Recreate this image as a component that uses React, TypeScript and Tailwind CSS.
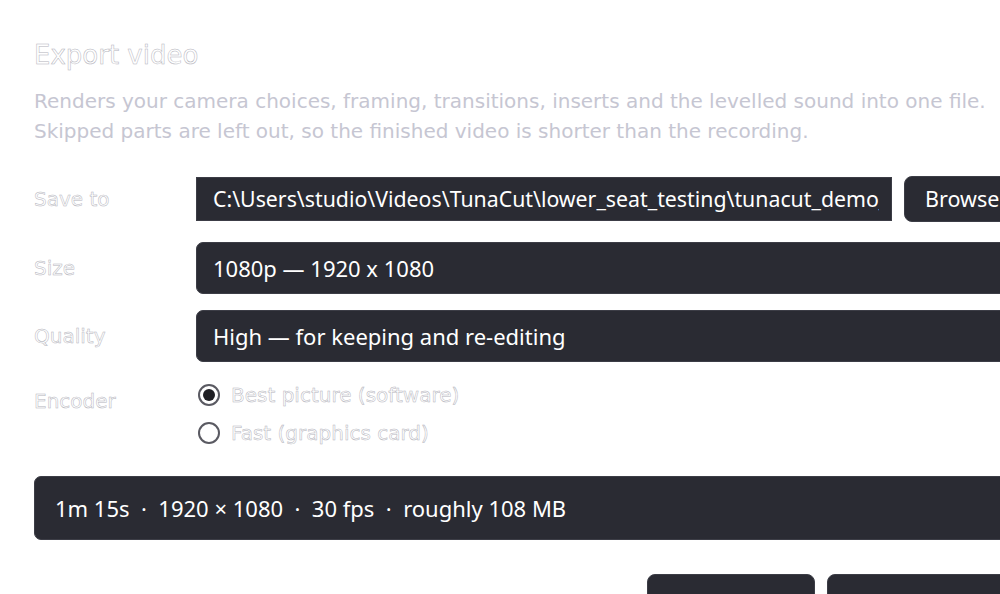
import React from "react";

const geo = "font-['DejaVu_Sans','Noto_Sans',sans-serif]";
const ui = "font-['Noto_Sans','Open_Sans',sans-serif]";
const ghost = "text-white [-webkit-text-stroke:0.5px_#b4b4bc]";

function Label({ children }: { children: React.ReactNode }) {
  return <div className={`w-[162px] shrink-0 text-[20px] ${geo} ${ghost}`}>{children}</div>;
}

function Radio({ checked, label }: { checked?: boolean; label: string }) {
  return (
    <div className="flex items-center gap-[11px] h-[38px]">
      <div className="ml-[2px] w-[22px] h-[22px] rounded-full border-2 border-[#5a5a62] flex items-center justify-center bg-white">
        {checked && <div className="w-[12px] h-[12px] rounded-full bg-[#1f1f24]" />}
      </div>
      <span className={`text-[20px] ${geo} ${ghost}`}>{label}</span>
    </div>
  );
}

export default function App() {
  return (
    <div className="w-[1000px] h-[594px] overflow-hidden bg-white">
      <div className="w-[1120px] pl-[34px] pt-[37px]">
        <h1 className={`text-[26px] leading-[36px] ${geo} ${ghost}`}>Export video</h1>
        <p className={`mt-[13px] text-[20px] leading-[30px] text-[#c6c6d2] ${geo}`}>
          Renders your camera choices, framing, transitions, inserts and the levelled sound into one file.
          <br />
          Skipped parts are left out, so the finished video is shorter than the recording.
        </p>

        <div className="mt-[30px] flex items-center">
          <Label>Save to</Label>
          <div className={`w-[696px] h-[44px] bg-[#2a2b33] border border-[#3c3d46] flex items-center pl-[16px] pr-[12px] overflow-hidden text-[21.3px] text-white whitespace-nowrap ${ui}`}>
            <span className="overflow-hidden">C:\Users\studio\Videos\TunaCut\lower_seat_testing\tunacut_demo_export.mp4</span>
          </div>
          <button className={`ml-[12px] h-[46px] px-[20px] rounded-[8px] bg-[#2a2b33] border border-[#3c3d46] text-[21.5px] text-white whitespace-nowrap ${ui}`}>
            Browse...
          </button>
        </div>

        <div className="mt-[20px] flex items-center">
          <Label>Size</Label>
          <div className={`flex-1 h-[52px] rounded-[7px] bg-[#2a2b33] border border-[#3c3d46] flex items-center pl-[16px] text-[22px] text-white ${ui}`}>
            1080p — 1920 x 1080
          </div>
        </div>

        <div className="mt-[16px] flex items-center">
          <Label>Quality</Label>
          <div className={`flex-1 h-[52px] rounded-[7px] bg-[#2a2b33] border border-[#3c3d46] flex items-center pl-[16px] text-[22px] text-white ${ui}`}>
            High — for keeping and re-editing
          </div>
        </div>

        <div className="mt-[14px] flex items-start">
          <div className="pt-[10px]">
            <Label>Encoder</Label>
          </div>
          <div className="flex flex-col">
            <Radio checked label="Best picture (software)" />
            <Radio label="Fast (graphics card)" />
          </div>
        </div>

        <div className={`mt-[24px] h-[64px] rounded-[7px] bg-[#2a2b33] border border-[#3c3d46] flex items-center pl-[20px] text-[22px] text-white whitespace-pre ${ui}`}>
          1m 15s  ·  1920 × 1080  ·  30 fps  ·  roughly 108 MB
        </div>

        <div className="mt-[34px] flex pl-[613px] gap-[12px]">
          <div className="w-[168px] h-[48px] rounded-[8px] bg-[#2a2b33] border border-[#3c3d46]" />
          <div className="w-[200px] h-[48px] rounded-[8px] bg-[#2a2b33] border border-[#3c3d46]" />
        </div>
      </div>
    </div>
  );
}
